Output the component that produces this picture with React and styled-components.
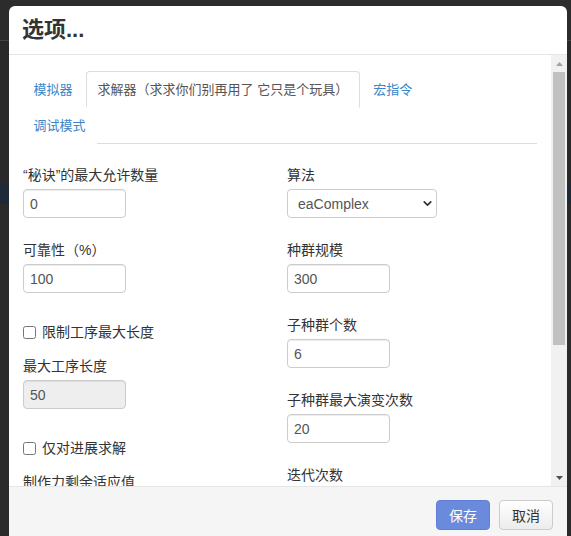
import styled, { createGlobalStyle } from "styled-components";
import { ChevronDown } from "lucide-react";

const GlobalStyle = createGlobalStyle`
  * { box-sizing: border-box; }
  html, body {
    margin: 0;
    height: 100%;
    overflow: hidden;
  }
  body {
    background: linear-gradient(
      to bottom,
      #2c2c2c 0,
      #2c2c2c 40px,
      #454545 40px,
      #454545 41px,
      #292929 41px,
      #292929 183px,
      #1e2a38 183px,
      #1e2a38 204px,
      #2b2b2b 204px
    );
    font-family: "Liberation Sans", Arial, "Noto Sans CJK SC", sans-serif;
    font-size: 14px;
    color: #333;
  }
`;

const tabs = [
  "模拟器",
  "求解器（求求你们别再用了 它只是个玩具）",
  "宏指令",
  "调试模式",
];

function App() {
  return (
    <>
      <GlobalStyle />
      <Page>
        <Modal>
          <Header>
            <Title>选项...</Title>
          </Header>
          <Body>
            <Content>
              <Tabs>
                {tabs.map((t, i) => (
                  <Tab key={t}>
                    <TabLink $active={i === 1}>{t}</TabLink>
                  </Tab>
                ))}
              </Tabs>
              <Form>
                <Column>
                  <Group>
                    <Label>“秘诀”的最大允许数量</Label>
                    <Input defaultValue="0" />
                  </Group>
                  <Group>
                    <Label>可靠性（%）</Label>
                    <Input defaultValue="100" />
                  </Group>
                  <Check>
                    <input type="checkbox" />
                    限制工序最大长度
                  </Check>
                  <Group>
                    <Label>最大工序长度</Label>
                    <Input defaultValue="50" disabled />
                  </Group>
                  <Check>
                    <input type="checkbox" />
                    仅对进展求解
                  </Check>
                  <Group>
                    <Label>制作力剩余适应值</Label>
                    <Input defaultValue="" />
                  </Group>
                </Column>
                <Column>
                  <Group>
                    <Label>算法</Label>
                    <SelectWrap>
                      <Select defaultValue="eaComplex">
                        <option>eaComplex</option>
                        <option>eaSimple</option>
                      </Select>
                      <Chevron>
                        <ChevronDown size={13} strokeWidth={3.2} />
                      </Chevron>
                    </SelectWrap>
                  </Group>
                  <Group>
                    <Label>种群规模</Label>
                    <Input defaultValue="300" />
                  </Group>
                  <Group>
                    <Label>子种群个数</Label>
                    <Input defaultValue="6" />
                  </Group>
                  <Group>
                    <Label>子种群最大演变次数</Label>
                    <Input defaultValue="20" />
                  </Group>
                  <Group>
                    <Label>迭代次数</Label>
                    <Input defaultValue="" />
                  </Group>
                </Column>
              </Form>
            </Content>
            <ScrollBar>
              <Arrow>
                <svg width="7" height="4" viewBox="0 0 7 4">
                  <polygon points="3.5,0 7,4 0,4" fill="#a3a3a3" />
                </svg>
              </Arrow>
              <Thumb />
              <Track />
              <Arrow>
                <svg width="7" height="4" viewBox="0 0 7 4">
                  <polygon points="0,0 7,0 3.5,4" fill="#505050" />
                </svg>
              </Arrow>
            </ScrollBar>
          </Body>
          <Footer>
            <Button $primary>保存</Button>
            <Button>取消</Button>
          </Footer>
        </Modal>
      </Page>
    </>
  );
}

export default App;

const Page = styled.div`
  height: 536px;
  padding: 6px 4px 0 9px;
  overflow: hidden;
`;

const Modal = styled.div`
  width: 558px;
  height: 560px;
  background: #fff;
  border-radius: 6px 6px 0 0;
  display: flex;
  flex-direction: column;
  overflow: hidden;
`;

const Header = styled.div`
  height: 49px;
  flex-shrink: 0;
  display: flex;
  align-items: center;
  padding: 0 13px;
  border-bottom: 1px solid #e5e5e5;
`;

const Title = styled.h3`
  margin: 0;
  font-size: 22px;
  font-weight: 700;
  color: #333;
  line-height: 1;
  padding-bottom: 1px;
`;

const Body = styled.div`
  height: 431px;
  flex-shrink: 0;
  display: flex;
`;

const Content = styled.div`
  flex: 1;
  overflow: hidden;
  padding: 16px 14px 0 13px;
`;

/* the tab strip is narrower than the body, so the last tab wraps */
const Tabs = styled.ul`
  list-style: none;
  margin: 0;
  padding: 0 80px 0 0;
  display: flex;
  flex-wrap: wrap;
  border-bottom: 1px solid #ddd;
`;

const Tab = styled.li`
  margin-bottom: -1px;
`;

const TabLink = styled.a`
  display: block;
  margin-right: 2px;
  padding: 8.5px 10.5px;
  font-size: 13px;
  line-height: 18px;
  border: 1px solid ${(p) => (p.$active ? "#ddd" : "transparent")};
  border-bottom-color: ${(p) => (p.$active ? "#fff" : "transparent")};
  border-radius: 4px 4px 0 0;
  background: #fff;
  color: ${(p) => (p.$active ? "#555" : "#3a86c8")};
  cursor: pointer;
`;

const Form = styled.div`
  display: grid;
  grid-template-columns: 1fr 1fr;
  column-gap: 14px;
  padding: 21px 0 0 1px;
`;

const Column = styled.div`
  display: flex;
  flex-direction: column;
`;

const Group = styled.div`
  margin-bottom: 22px;
`;

const Label = styled.label`
  display: block;
  font-size: 14px;
  line-height: 20px;
  margin-bottom: 4px;
  color: #333;
`;

const Input = styled.input`
  display: block;
  width: 103px;
  height: 29px;
  padding: 0 6px;
  font-family: "Liberation Sans", Arial, sans-serif;
  font-size: 14px;
  color: #555;
  background: #fff;
  border: 1px solid #ccc;
  border-radius: 4px;
  box-shadow: inset 0 1px 1px rgba(0, 0, 0, 0.075);
  outline: none;

  &:disabled {
    background: #eee;
    color: #555;
  }
`;

const SelectWrap = styled.div`
  position: relative;
  width: 150px;
`;

const Select = styled.select`
  display: block;
  width: 150px;
  height: 29px;
  padding: 0 10px;
  appearance: none;
  font-family: "Liberation Sans", Arial, sans-serif;
  font-size: 14px;
  color: #555;
  background: #fff;
  border: 1px solid #ccc;
  border-radius: 4px;
  outline: none;
`;

const Chevron = styled.span`
  position: absolute;
  right: 3px;
  top: 8px;
  display: flex;
  color: #333;
  pointer-events: none;
`;

const Check = styled.label`
  display: flex;
  align-items: center;
  gap: 6px;
  font-size: 14px;
  line-height: 20px;
  margin: 7px 0 14px;
  color: #333;

  input {
    margin: 0;
    width: 13px;
    height: 13px;
  }
`;

const ScrollBar = styled.div`
  width: 16px;
  flex-shrink: 0;
  background: #f1f1f1;
  display: flex;
  flex-direction: column;
`;

const Arrow = styled.div`
  height: 17px;
  display: flex;
  align-items: center;
  justify-content: center;
`;

const Thumb = styled.div`
  height: 273px;
  margin: 0 2px;
  background: #c1c1c1;
`;

const Track = styled.div`
  flex: 1;
`;

const Footer = styled.div`
  flex: 1;
  display: flex;
  justify-content: flex-end;
  align-items: flex-start;
  gap: 9px;
  padding: 13px 14px;
  background: #f5f5f5;
  border-top: 1px solid #e5e5e5;
`;

const Button = styled.button`
  height: 30px;
  padding: 0 12px;
  font-family: "Liberation Sans", Arial, "Noto Sans CJK SC", sans-serif;
  font-size: 14px;
  border-radius: 4px;
  cursor: pointer;
  color: ${(p) => (p.$primary ? "#fff" : "#333")};
  background: ${(p) =>
    p.$primary ? "#6a8bdc" : "linear-gradient(#fff, #ececec)"};
  border: 1px solid ${(p) => (p.$primary ? "#5f80d4" : "#ccc")};
`;
